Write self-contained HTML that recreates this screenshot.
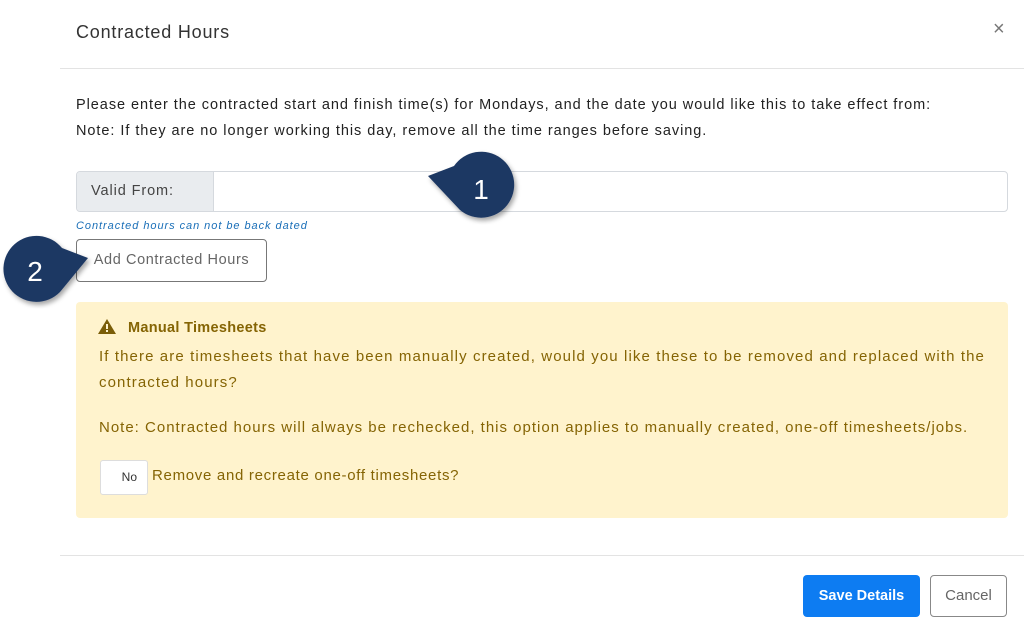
<!DOCTYPE html>
<html><head><style>
body{margin:0;width:1024px;height:631px;background:#fff;font-family:"Liberation Sans",sans-serif;position:relative;overflow:hidden;color:#212529}
.a{position:absolute;white-space:nowrap}
</style></head><body>
<div class="a" style="left:76px;top:22px;font-size:18px;letter-spacing:0.8px;color:#333">Contracted Hours</div>
<div class="a" style="left:993px;top:18px;font-size:20px;color:#777">×</div>
<div class="a" style="left:60px;top:68px;width:964px;height:1px;background:#e3e3e3"></div>
<div class="a" style="left:76px;top:92px;font-size:14.5px;letter-spacing:0.95px;line-height:26px;color:#222">Please enter the contracted start and finish time(s) for Mondays, and the date you would like this to take effect from:<br>Note: If they are no longer working this day, remove all the time ranges before saving.</div>
<div class="a" style="left:76px;top:171px;width:930px;height:39px;border:1px solid #d5d9de;border-radius:4px;overflow:hidden">
<div style="width:137px;height:39px;background:#e9ecef;border-right:1px solid #d5d9de;font-size:14.5px;letter-spacing:0.9px;line-height:39px;padding-left:14px;box-sizing:border-box;color:#444">Valid From:</div></div>
<div class="a" style="left:76px;top:220px;font-size:11px;letter-spacing:0.95px;font-style:italic;color:#1a6fb8">Contracted hours can not be back dated</div>
<div class="a" style="left:76px;top:239px;width:191px;height:43px;border:1px solid #777;border-radius:4px;box-sizing:border-box;font-size:14.5px;letter-spacing:0.6px;line-height:41px;text-align:center;color:#666">Add Contracted Hours</div>
<div class="a" style="left:76px;top:302px;width:932px;height:216px;background:#fff3cd;border-radius:4px;color:#856404;font-size:15px;letter-spacing:1.1px">
<div class="a" style="left:22px;top:17px;font-weight:bold;font-size:14.5px;letter-spacing:0.3px"><svg width="18" height="15" viewBox="0 0 18 15" style="vertical-align:-2px;margin-right:12px"><path d="M9 0L18 15H0Z" fill="#7a5d08"/><rect x="8" y="5" width="2" height="5" fill="#fff3cd"/><rect x="8" y="11" width="2" height="2" fill="#fff3cd"/></svg>Manual Timesheets</div>
<div class="a" style="left:23px;top:42px;width:886px;white-space:normal;line-height:26px;text-align:justify;text-align-last:left">If there are timesheets that have been manually created, would you like these to be removed and replaced with the contracted hours?</div>
<div class="a" style="left:23px;top:117px;letter-spacing:1.0px">Note: Contracted hours will always be rechecked, this option applies to manually created, one-off timesheets/jobs.</div>
<div class="a" style="left:24px;top:158px;width:48px;height:35px;background:#fff;border:1px solid #ddd;border-radius:3px;box-sizing:border-box;font-size:12px;letter-spacing:0;line-height:33px;text-align:right;padding-right:10px;color:#333">No</div>
<div class="a" style="left:76px;top:165px;letter-spacing:0.7px">Remove and recreate one-off timesheets?</div>
</div>
<div class="a" style="left:60px;top:555px;width:964px;height:1px;background:#e3e3e3"></div>
<div class="a" style="left:803px;top:575px;width:117px;height:42px;background:#0d7cf2;border-radius:4px;color:#fff;font-weight:bold;font-size:14.5px;line-height:42px;text-align:center">Save Details</div>
<div class="a" style="left:930px;top:575px;width:77px;height:42px;border:1px solid #888;border-radius:4px;box-sizing:border-box;color:#666;font-size:15px;line-height:40px;text-align:center">Cancel</div>
<svg class="a" style="left:0;top:0" width="1024" height="631">
<defs><filter id="s"><feDropShadow dx="2" dy="3" stdDeviation="2.5" flood-opacity="0.35"/></filter></defs>
<path d="M428 176 L454 166 A33 33 0 1 1 460 210 Z" fill="#1f3864" filter="url(#s)"/>
<text x="481" y="199" font-size="28" fill="#fff" text-anchor="middle" font-family="Liberation Sans">1</text>
<path d="M88 258 L62 248 A33 33 0 1 0 60 292 Z" fill="#1f3864" filter="url(#s)"/>
<text x="35" y="281" font-size="28" fill="#fff" text-anchor="middle" font-family="Liberation Sans">2</text>
</svg>
</body></html>
